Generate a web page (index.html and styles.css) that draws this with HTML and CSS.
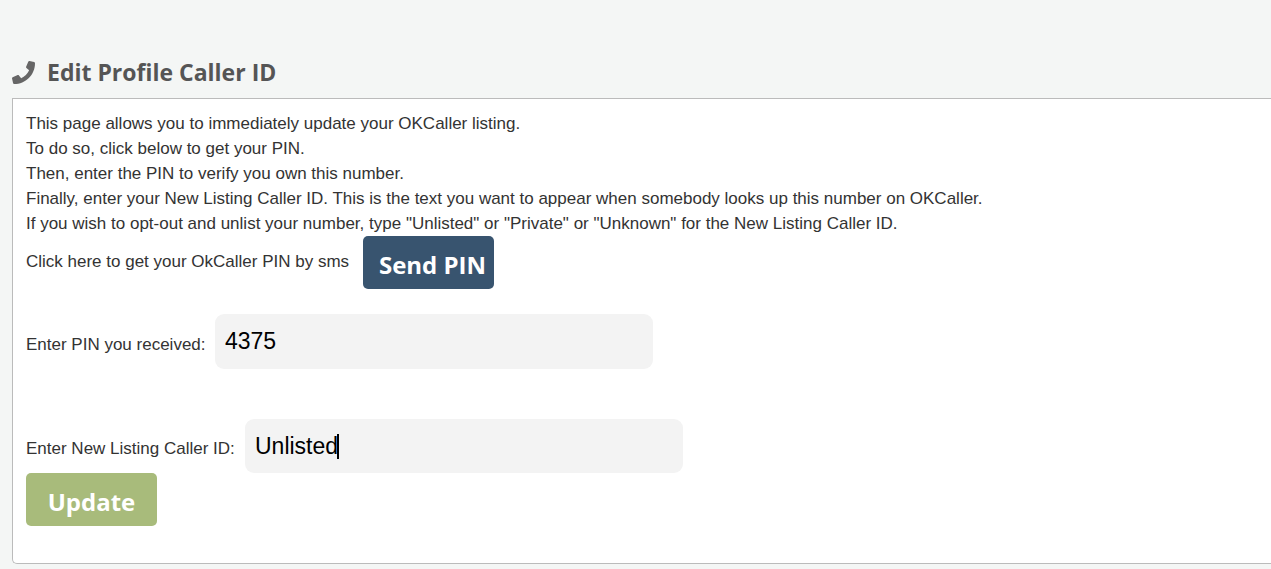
FILE: index.html
```html
<!DOCTYPE html>
<html lang="en">
<head>
<meta charset="utf-8">
<title>Edit Profile Caller ID</title>
<link rel="stylesheet" href="styles.css">
</head>
<body>
<main class="page">
  <h1 class="title">
    <svg class="title-icon" viewBox="0 0 512 512" aria-hidden="true"><path d="M493.400 24.600l-104-24c-11.300-2.600-22.900 3.300-27.500 13.900l-48 112c-4.200 9.800-1.400 21.300 6.900 28l60.600 49.600c-36 76.700-98.900 140.500-177.200 177.200l-49.600-60.600c-6.800-8.300-18.200-11.100-28-6.900l-112 48C3.900 366.500-2 378.100.6 389.400l24 104C27.100 504.200 36.700 512 48 512c256.100 0 464-207.500 464-464 0-11.200-7.700-20.900-18.600-23.400z"/></svg>
    <span>Edit Profile Caller ID</span>
  </h1>
  <form class="panel">
    <p class="intro">This page allows you to immediately update your OKCaller listing.<br>
    To do so, click below to get your PIN.<br>
    Then, enter the PIN to verify you own this number.<br>
    Finally, enter your New Listing Caller ID. This is the text you want to appear when somebody looks up this number on OKCaller.<br>
    If you wish to opt-out and unlist your number, type "Unlisted" or "Private" or "Unknown" for the New Listing Caller ID.</p>
    <div class="row row-send">
      <span class="send-text">Click here to get your OkCaller PIN by sms</span>
      <button class="button button-send" type="button">Send PIN</button>
    </div>
    <div class="row row-pin">
      <label class="label label-pin" for="pin">Enter PIN you received:</label>
      <input class="input" id="pin" type="text" value="4375">
    </div>
    <div class="row">
      <label class="label label-listing" for="listing">Enter New Listing Caller ID:</label>
      <span class="field">
        <input class="input" id="listing" type="text" value="Unlisted">
        <span class="caret"></span>
      </span>
    </div>
    <button class="button button-update" type="submit">Update</button>
  </form>
</main>
</body>
</html>
```
FILE: styles.css
```css
* {
  box-sizing: border-box;
}

body {
  margin: 0;
  background: #f4f6f5;
  color: #333;
  font: 17px/25px "Liberation Sans", Arial, sans-serif;
}

.page {
  padding: 56px 0 5px 12px;
}

.title {
  display: flex;
  align-items: center;
  gap: 12px;
  margin: 0 0 10px;
  color: #555;
  font: bold 23px/32px "Open Sans", "Noto Sans", sans-serif;
}

.title-icon {
  width: 23px;
  height: 23px;
  fill: #666;
}

.panel {
  padding: 12px 13px 37px;
  border: 1px solid #bbb;
  border-right: 0;
  border-radius: 0 0 0 5px;
  background: #fff;
}

.intro {
  margin: 0;
}

.row {
  display: flex;
  align-items: center;
  gap: 5px;
}

.row-send {
  margin-bottom: 25px;
}

.row-pin {
  margin-bottom: 50px;
}

.send-text {
  min-width: 332px;
  padding-bottom: 3px;
}

.label {
  padding-top: 5px;
}

.label-pin {
  min-width: 184px;
}

.label-listing {
  min-width: 214px;
}

.button {
  display: block;
  min-width: 131px;
  height: 53px;
  padding: 3px 7px 0 15px;
  border: 0;
  border-radius: 5px;
  color: #fff;
  font: bold 24px/35px "Open Sans", "Noto Sans", sans-serif;
  white-space: nowrap;
}

.button-send {
  background: #38546f;
}

.button-update {
  padding: 3px 15px 0;
  background: #a8bb7b;
}

.field {
  position: relative;
}

.input {
  display: block;
  width: 438px;
  max-width: 100%;
  height: 54px;
  padding: 0 10px;
  border: 0;
  border-radius: 9px;
  outline: 0;
  background: #f3f3f3;
  color: #000;
  font: 23px/30px "Liberation Sans", Arial, sans-serif;
}

.row-pin .input {
  height: 55px;
}

.caret {
  position: absolute;
  top: 15px;
  left: 92px;
  width: 2px;
  height: 25px;
  background: #000;
}
```
